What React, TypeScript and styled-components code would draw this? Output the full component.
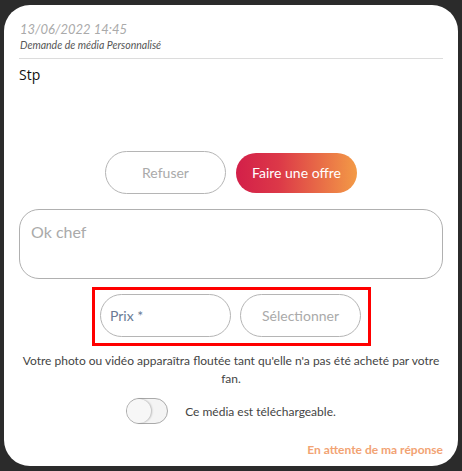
import React from "react";
import styled, { createGlobalStyle } from "styled-components";

const Global = createGlobalStyle`
  html, body { margin: 0; padding: 0; background: #2b2b2b; }
  body { font-family: Lato, "Open Sans", sans-serif; }
  * { box-sizing: border-box; }
`;

const Page = styled.div`
  width: 462px;
  height: 471px;
  padding: 5px 4px;
  background: #2b2b2b;
`;

const Card = styled.div`
  width: 454px;
  height: 461px;
  background: #fff;
  border-radius: 26px;
  padding: 16px 15px 0 15px;
  display: flex;
  flex-direction: column;
  & > * { flex-shrink: 0; }
`;

const Header = styled.div`
  display: flex;
  flex-direction: column;
  padding-left: 1px;
  border-bottom: 1px solid #dcdcdc;
`;

const DateText = styled.div`
  font-style: italic;
  font-size: 13px;
  color: #aaa;
  line-height: 16px;
`;

const SubText = styled.div`
  font-style: italic;
  font-size: 10.5px;
  color: #555;
  line-height: 14px;
  margin: 1px 0 6px;
`;

const Message = styled.div`
  font-family: "Open Sans", sans-serif;
  font-size: 14px;
  color: #111;
  line-height: 18px;
  margin: 7px 0 0 0;
  height: 85px;
`;

const Actions = styled.div`
  display: flex;
  justify-content: center;
  align-items: center;
  gap: 10px;
  height: 43px;
`;

const PillButton = styled.button<{ $primary?: boolean }>`
  width: 121px;
  height: ${(p) => (p.$primary ? "40px" : "43px")};
  border-radius: 22px;
  font-family: Lato, sans-serif;
  font-size: 14px;
  cursor: pointer;
  border: ${(p) => (p.$primary ? "none" : "1px solid #b5b5b5")};
  color: ${(p) => (p.$primary ? "#fff" : "#aaa")};
  background: ${(p) =>
    p.$primary ? "linear-gradient(90deg, #d31f49 0%, #dc3848 35%, #f39a46 100%)" : "#fff"};
`;

const TextArea = styled.div`
  margin-top: 15px;
  height: 70px;
  border: 1px solid #b0b0b0;
  border-radius: 20px;
  padding: 12px 0 0 11px;
  font-size: 16px;
  line-height: 20px;
  color: #aaa;
`;

const Highlight = styled.div`
  align-self: center;
  margin: 8px 0 0 1px;
  width: 279px;
  height: 59px;
  border: 3px solid #f00;
  display: flex;
  gap: 9px;
  padding: 4px 0 0 5px;
`;

const Field = styled.div<{ $center?: boolean }>`
  width: ${(p) => (p.$center ? "121px" : "131px")};
  height: 43px;
  border: 1px solid #b5b5b5;
  border-radius: 22px;
  display: flex;
  align-items: center;
  justify-content: ${(p) => (p.$center ? "center" : "flex-start")};
  padding-left: ${(p) => (p.$center ? "0" : "9px")};
  font-size: 14px;
  color: ${(p) => (p.$center ? "#aaa" : "#6a7a95")};
`;

const Note = styled.div`
  margin-top: 6px;
  text-align: center;
  font-size: 12px;
  color: #444;
  line-height: 18px;
  white-space: nowrap;
`;

const ToggleRow = styled.div`
  display: flex;
  align-items: center;
  justify-content: center;
  gap: 17px;
  margin-top: 10px;
`;

const Switch = styled.div`
  width: 42px;
  height: 26px;
  border-radius: 13px;
  border: 1px solid #aaa;
  background: #f4f4f4;
  position: relative;
`;

const Knob = styled.span`
  position: absolute;
  left: 0;
  top: 0;
  width: 24px;
  height: 24px;
  border-radius: 50%;
  background: #f7f7f7;
  box-shadow: 1px 0 2px rgba(0, 0, 0, 0.25);
`;

const ToggleLabel = styled.span`
  font-size: 12px;
  color: #444;
`;

const Status = styled.div`
  margin-top: 18px;
  text-align: right;
  font-size: 12px;
  line-height: 15px;
  font-weight: 700;
  color: #f2a373;
`;

export default function App() {
  return (
    <>
      <Global />
      <Page>
        <Card>
          <Header>
            <DateText>13/06/2022 14:45</DateText>
            <SubText>Demande de média Personnalisé</SubText>
          </Header>
          <Message>Stp</Message>
          <Actions>
            <PillButton>Refuser</PillButton>
            <PillButton $primary>Faire une offre</PillButton>
          </Actions>
          <TextArea>Ok chef</TextArea>
          <Highlight>
            <Field>Prix *</Field>
            <Field $center>Sélectionner</Field>
          </Highlight>
          <Note>
            Votre photo ou vidéo apparaîtra floutée tant qu'elle n'a pas été acheté par votre
            <br />
            fan.
          </Note>
          <ToggleRow>
            <Switch>
              <Knob />
            </Switch>
            <ToggleLabel>Ce média est téléchargeable.</ToggleLabel>
          </ToggleRow>
          <Status>En attente de ma réponse</Status>
        </Card>
      </Page>
    </>
  );
}
